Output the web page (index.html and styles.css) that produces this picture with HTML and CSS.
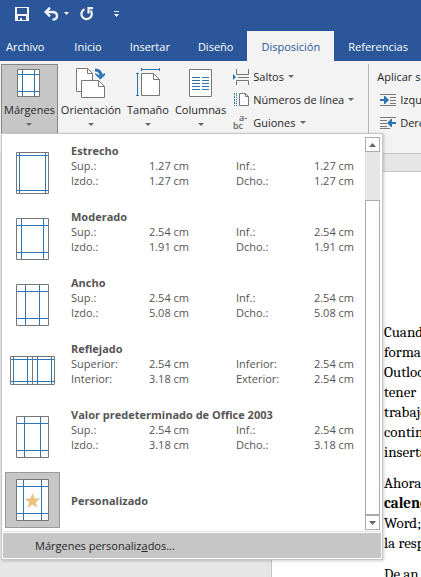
FILE: index.html
```html
<!DOCTYPE html>
<html lang="es">
<head>
    <meta charset="UTF-8">
    <meta name="viewport" content="width=device-width, initial-scale=1.0">
    <title>Word - Disposición</title>
    <link rel="stylesheet" href="styles.css">
</head>
<body>
    <header class="title-bar">
        <div class="quick-access">
            <button class="quick-btn save" aria-label="Guardar">
                <svg width="14" height="14" viewBox="0 0 14 14"><path fill="#f3f3f3" fill-rule="evenodd" d="M0 0h14v14H0zM2 1v6h10V1zM3 9v4h2v-2h2v2h4V9z"/></svg>
            </button>
            <button class="quick-btn undo" aria-label="Deshacer">
                <svg width="26" height="14" viewBox="0 0 26 14"><path fill="none" stroke="#f3f3f3" stroke-width="2.400" d="M6 0.700L1.600 5L6 9.300M2 5h6.500q4.500 0 4.500 4q0 3.500-4.500 3.500"/><path fill="#f3f3f3" d="M20 5h5l-2.500 3z"/></svg>
            </button>
            <button class="quick-btn redo" aria-label="Rehacer">
                <svg width="14" height="14" viewBox="0 0 14 14"><path fill="none" stroke="#f3f3f3" stroke-width="2.200" d="M4.500 2.200A5.200 5.200 0 1 0 10.600 3.600M8.500 6.500V1.200H13"/></svg>
            </button>
            <button class="quick-btn" aria-label="Personalizar">
                <svg width="6" height="7" viewBox="0 0 6 7"><path fill="#f3f3f3" d="M0 0h5v1H0zM0 3h5L2.500 6z"/></svg>
            </button>
        </div>
        <nav class="tabs">
            <button class="tab file">Archivo</button>
            <button class="tab">Inicio</button>
            <button class="tab">Insertar</button>
            <button class="tab">Diseño</button>
            <button class="tab active">Disposición</button>
            <button class="tab">Referencias</button>
        </nav>
    </header>

    <section class="ribbon">
        <div class="group big-group">
            <div class="menu-holder">
                <button class="big-btn pressed">
                    <svg width="30" height="32" viewBox="0 0 30 32"><path fill="#fff" stroke="#777" d="M3.500 2.500h22v27h-22z"/><path fill="none" stroke="#2e75b6" d="M8.500 3v26M20.500 3v26M4 7.500h21M4 24.500h21"/></svg>
                    <span>Márgenes</span>
                    <i class="caret"></i>
                </button>

                <div class="margins-menu">
                    <div class="gallery">
                        <div class="options">
                            <button class="option">
                                <span class="thumb"><svg width="33" height="42" viewBox="0 0 33 42"><path fill="#fff" stroke="#777" d="M.5.5h32v41H.5z"/><path fill="none" stroke="#2e75b6" d="M3.500 1v40M29.500 1v40M1 3.500h31M1 38.500h31"/></svg></span>
                                <span class="details">
                                    <strong>Estrecho</strong>
                                    <span>Sup.:</span><span class="value">1.27 cm</span><span class="second">Inf.:</span><span class="value">1.27 cm</span>
                                    <span>Izdo.:</span><span class="value">1.27 cm</span><span class="second">Dcho.:</span><span class="value">1.27 cm</span>
                                </span>
                            </button>
                            <button class="option">
                                <span class="thumb"><svg width="33" height="42" viewBox="0 0 33 42"><path fill="#fff" stroke="#777" d="M.5.5h32v41H.5z"/><path fill="none" stroke="#2e75b6" d="M5.500 1v40M27.500 1v40M1 7.500h31M1 34.500h31"/></svg></span>
                                <span class="details">
                                    <strong>Moderado</strong>
                                    <span>Sup.:</span><span class="value">2.54 cm</span><span class="second">Inf.:</span><span class="value">2.54 cm</span>
                                    <span>Izdo.:</span><span class="value">1.91 cm</span><span class="second">Dcho.:</span><span class="value">1.91 cm</span>
                                </span>
                            </button>
                            <button class="option">
                                <span class="thumb"><svg width="33" height="42" viewBox="0 0 33 42"><path fill="#fff" stroke="#777" d="M.5.5h32v41H.5z"/><path fill="none" stroke="#2e75b6" d="M9.500 1v40M23.500 1v40M1 7.500h31M1 34.500h31"/></svg></span>
                                <span class="details">
                                    <strong>Ancho</strong>
                                    <span>Sup.:</span><span class="value">2.54 cm</span><span class="second">Inf.:</span><span class="value">2.54 cm</span>
                                    <span>Izdo.:</span><span class="value">5.08 cm</span><span class="second">Dcho.:</span><span class="value">5.08 cm</span>
                                </span>
                            </button>
                            <button class="option">
                                <span class="thumb"><svg width="45" height="30" viewBox="0 0 45 30"><path fill="#fff" stroke="#777" d="M.5.5h44v28H.5z"/><path fill="none" stroke="#2e75b6" d="M3.500 1v27M17.500 1v27M27.500 1v27M41.500 1v27M1 3.500h43M1 25.500h43"/><path stroke="#777" d="M22.500 1v27"/></svg></span>
                                <span class="details">
                                    <strong>Reflejado</strong>
                                    <span>Superior:</span><span class="value">2.54 cm</span><span class="second">Inferior:</span><span class="value">2.54 cm</span>
                                    <span>Interior:</span><span class="value">3.18 cm</span><span class="second">Exterior:</span><span class="value">2.54 cm</span>
                                </span>
                            </button>
                            <button class="option">
                                <span class="thumb"><svg width="33" height="42" viewBox="0 0 33 42"><path fill="#fff" stroke="#777" d="M.5.5h32v41H.5z"/><path fill="none" stroke="#2e75b6" d="M8.500 1v40M24.500 1v40M1 7.500h31M1 34.500h31"/></svg></span>
                                <span class="details">
                                    <strong>Valor predeterminado de Office 2003</strong>
                                    <span>Sup.:</span><span class="value">2.54 cm</span><span class="second">Inf.:</span><span class="value">2.54 cm</span>
                                    <span>Izdo.:</span><span class="value">3.18 cm</span><span class="second">Dcho.:</span><span class="value">3.18 cm</span>
                                </span>
                            </button>
                            <button class="option custom">
                                <span class="thumb selected"><svg width="33" height="42" viewBox="0 0 33 42"><path fill="#fff" stroke="#777" d="M.5.5h32v41H.5z"/><path fill="none" stroke="#2e75b6" d="M7.500 1v40M25.500 1v40M1 7.500h31M1 34.500h31"/><path fill="#eac282" d="M16.500 14l2.100 5.500 5.900.1-4.700 3.600 1.700 5.800-5-3.500-5 3.500 1.700-5.800-4.700-3.600 5.900-.1z"/></svg></span>
                                <span class="details">
                                    <strong>Personalizado</strong>
                                </span>
                            </button>
                        </div>
                        <div class="scrollbar">
                            <button class="scroll-btn" aria-label="Subir"><svg width="7" height="4" viewBox="0 0 7 4"><path fill="#666" d="M0 4h7L3.500 0z"/></svg></button>
                            <div class="track"><div class="handle"></div></div>
                            <button class="scroll-btn" aria-label="Bajar"><svg width="7" height="4" viewBox="0 0 7 4"><path fill="#666" d="M0 0h7L3.500 4z"/></svg></button>
                        </div>
                    </div>
                    <button class="custom-margins">Márgenes personaliz<u>a</u>dos...</button>
                </div>
            </div>
            <button class="big-btn orientation">
                <svg width="30" height="32" viewBox="0 0 30 32"><path fill="#fff" stroke="#777" d="M.5 1.500h11l5 5v18H.5z"/><path fill="none" stroke="#777" d="M11.500 1.500v5h5"/><path fill="#fff" stroke="#777" d="M5.500 13.500h17l6 6v11h-23z"/><path fill="none" stroke="#777" d="M22.500 13.500v6h6"/><path fill="none" stroke="#2e75b6" stroke-width="3" d="M19 3q6 0 6 6"/><path fill="#2e75b6" d="M19 6l5 2.500L29 6v2l-4.500 4.500L19.500 8z"/></svg>
                <span>Orientación</span>
                <i class="caret"></i>
            </button>
            <button class="big-btn size">
                <svg width="30" height="32" viewBox="0 0 30 32"><path fill="#fff" stroke="#777" d="M8.500 6.500h12l6 6v16h-18z"/><path fill="none" stroke="#777" d="M20.500 6.500v6h6"/><path fill="none" stroke="#2e75b6" d="M8 2.500h19M8.500 1v3M26.500 1v3M4.500 6v23M3 6.500h3M3 28.500h3"/></svg>
                <span>Tamaño</span>
                <i class="caret"></i>
            </button>
            <button class="big-btn columns">
                <svg width="30" height="32" viewBox="0 0 30 32"><path fill="#fff" stroke="#777" d="M3.500 2.500h22v27h-22z"/><path fill="none" stroke="#2e75b6" d="M6 10.500h8M6 13.500h8M6 16.500h8M6 19.500h8M6 22.500h8M16 10.500h7M16 13.500h7M16 16.500h7M16 19.500h7M16 22.500h7"/></svg>
                <span>Columnas</span>
                <i class="caret"></i>
            </button>
        </div>
        <div class="group small-group">
            <button class="small-btn">
                <svg width="16" height="16" viewBox="0 0 16 16"><path fill="none" stroke="#777" d="M3.500 0v5.500h12V0M5 8.500h11M3.500 16v-4.500h12V16"/><path fill="#2e75b6" d="M0 5l3 3-3 3z"/></svg>
                <span>Saltos</span><i class="caret"></i>
            </button>
            <button class="small-btn">
                <svg width="16" height="16" viewBox="0 0 16 16"><path fill="#fff" stroke="#777" d="M6.500 1.500h6l3 3v9h-9z"/><path fill="none" stroke="#777" d="M12.500 1.500v3h3"/><path stroke="#2e75b6" stroke-dasharray="2 1" d="M1.500 1v13"/><path stroke="#2e75b6" stroke-dasharray="1 1" d="M3.500 1v13"/></svg>
                <span>Números de línea</span><i class="caret"></i>
            </button>
            <button class="small-btn">
                <svg width="16" height="16" viewBox="0 0 16 16"><text x="6" y="6" class="glyph">a-</text><text x="0" y="14" class="glyph">bc</text></svg>
                <span>Guiones</span><i class="caret"></i>
            </button>
        </div>
        <div class="group indent-group">
            <div class="group-title">Aplicar sangría</div>
            <div class="small-btn">
                <svg width="16" height="14" viewBox="0 0 16 14"><path stroke="#777" d="M0 1.500h16M10 4.500h6M10 7.500h6M10 10.500h6M0 12.500h16"/><path fill="#2e75b6" d="M0 6h4V3h1l4 4-4 4H4V8H0z"/></svg>
                <span>Izquierda:</span>
            </div>
            <div class="small-btn">
                <svg width="16" height="14" viewBox="0 0 16 14"><path stroke="#777" d="M0 1.500h16M0 4.500h7M0 7.500h7M0 10.500h7M0 12.500h10"/><path fill="#2e75b6" d="M16 6h-4V3h-1L7 7l4 4h1V8h4z"/></svg>
                <span>Derecha:</span>
            </div>
        </div>
    </section>

    <main class="workspace">
        <article class="page">
            <p>Cuando<br>formato<br>Outlook<br>tener<br>trabajo<br>continua<br>insertar</p>
            <p>Ahora<br><b>calendar</b><br>Word;<br>la resp</p>
            <p>De an</p>
        </article>
    </main>
</body>
</html>
```

FILE: styles.css
```css
* {
    margin: 0;
    padding: 0;
    box-sizing: border-box;
}

body {
    display: flex;
    flex-direction: column;
    height: 100vh;
    overflow: hidden;
    font-family: "Segoe UI", "Open Sans", "Noto Sans", sans-serif;
    font-size: 11px;
    line-height: 15px;
    color: #262626;
    background: #e6e6e6;
}

button {
    font: inherit;
    color: inherit;
    background: none;
    border: none;
    white-space: nowrap;
}

svg {
    display: block;
    flex: none;
}

/* Title bar and tabs */
.title-bar {
    flex: none;
    background: #2b579a;
    color: white;
}

.quick-access {
    display: flex;
    align-items: center;
    height: 31px;
    padding: 0 15px;
}

.quick-access svg {
    margin-top: -3px;
}

.save {
    margin-right: 15px;
}

.undo {
    margin-right: 10px;
}

.redo {
    margin-right: 20px;
}

.tabs {
    display: flex;
    height: 30px;
    overflow: hidden;
}

.tab {
    flex: none;
    padding: 0 14px;
}

.tab.file {
    padding: 0 16px 0 6px;
}

.tab.active {
    background: #f3f3f3;
    color: #2b579a;
}

/* Ribbon */
.ribbon {
    flex: none;
    display: flex;
    height: 93px;
    padding: 3px 0 3px 1px;
    background: #f3f3f3;
    border-bottom: 1px solid #c6c6c6;
}

.group {
    flex: none;
}

.big-group {
    display: flex;
    align-items: flex-start;
}

.menu-holder {
    position: relative;
}

.big-btn {
    display: flex;
    flex-direction: column;
    align-items: center;
    height: 70px;
    padding: 3px;
}

.big-btn span {
    margin-top: 3px;
}

.big-btn .caret {
    margin-top: 6px;
}

.big-btn.pressed {
    padding: 2px;
    background: #c6c6c6;
    border: 1px solid #868686;
}

.caret {
    flex: none;
    border: 3px solid transparent;
    border-top-color: #666;
    border-bottom: none;
}

.small-group {
    padding: 1px 14px 0 4px;
    border-right: 1px solid #b5b5b5;
}

.small-btn {
    display: flex;
    align-items: center;
    gap: 4px;
    height: 23px;
    white-space: nowrap;
}

.glyph {
    font-size: 9px;
    font-weight: 600;
    fill: #666;
}

.indent-group {
    flex: 1;
    min-width: 0;
    padding: 1px 0 0 8px;
    overflow: hidden;
}

.group-title {
    line-height: 23px;
    white-space: nowrap;
}

.indent-group .small-btn {
    padding-left: 3px;
}

/* Margins menu */
.margins-menu {
    position: absolute;
    top: 69px;
    left: 0;
    z-index: 10;
    width: 382px;
    padding: 1px;
    background: white;
    border: 1px solid #c6c6c6;
    box-shadow: 1px 1px 3px rgba(0, 0, 0, 0.2);
}

.gallery {
    display: flex;
    padding: 2px 0 1px;
    border-bottom: 1px solid #e1e1e1;
    margin-bottom: 1px;
    color: #555;
}

.options {
    flex: 1;
    padding-top: 3px;
}

.option {
    display: flex;
    align-items: flex-start;
    width: 100%;
    height: 66px;
    padding-left: 2px;
    text-align: left;
}

.option.custom {
    align-items: center;
    height: 60px;
}

.thumb {
    display: flex;
    flex: none;
    align-items: center;
    justify-content: center;
    width: 55px;
    height: 66px;
    margin-right: 11px;
}

.thumb.selected {
    height: 56px;
    background: #c6c6c6;
    border: 1px solid #999;
}

.details {
    display: grid;
    grid-template-columns: 59px 59px 106px 59px;
    padding-top: 3px;
}

.custom .details {
    padding: 0;
}

.details strong {
    grid-column: 1 / -1;
}

.value {
    justify-self: end;
}

.second {
    padding-left: 47px;
}

.scrollbar {
    display: flex;
    flex-direction: column;
    width: 15px;
    margin-right: 1px;
}

.scroll-btn {
    display: flex;
    align-items: center;
    justify-content: center;
    height: 15px;
    background: white;
    border: 1px solid #ababab;
}

.track {
    flex: 1;
    padding-top: 48px;
    background: #e6e6e6;
}

.handle {
    height: 100%;
    background: white;
    border: 1px solid #ababab;
}

.custom-margins {
    display: block;
    width: 100%;
    height: 25px;
    padding-left: 32px;
    background: #c6c6c6;
    text-align: left;
}

/* Document */
.workspace {
    flex: 1;
    padding: 17px 0 0 271px;
    overflow: hidden;
}

.page {
    height: 100%;
    padding: 150px 0 0 112px;
    background: white;
    border-top: 1px solid #c6c6c6;
    border-left: 1px solid #c6c6c6;
    font-family: Cambria, "Noto Serif", "Liberation Serif", serif;
    font-size: 15px;
    line-height: 20px;
    color: black;
    white-space: nowrap;
    overflow: hidden;
}

.page p {
    margin-bottom: 11px;
}
```
